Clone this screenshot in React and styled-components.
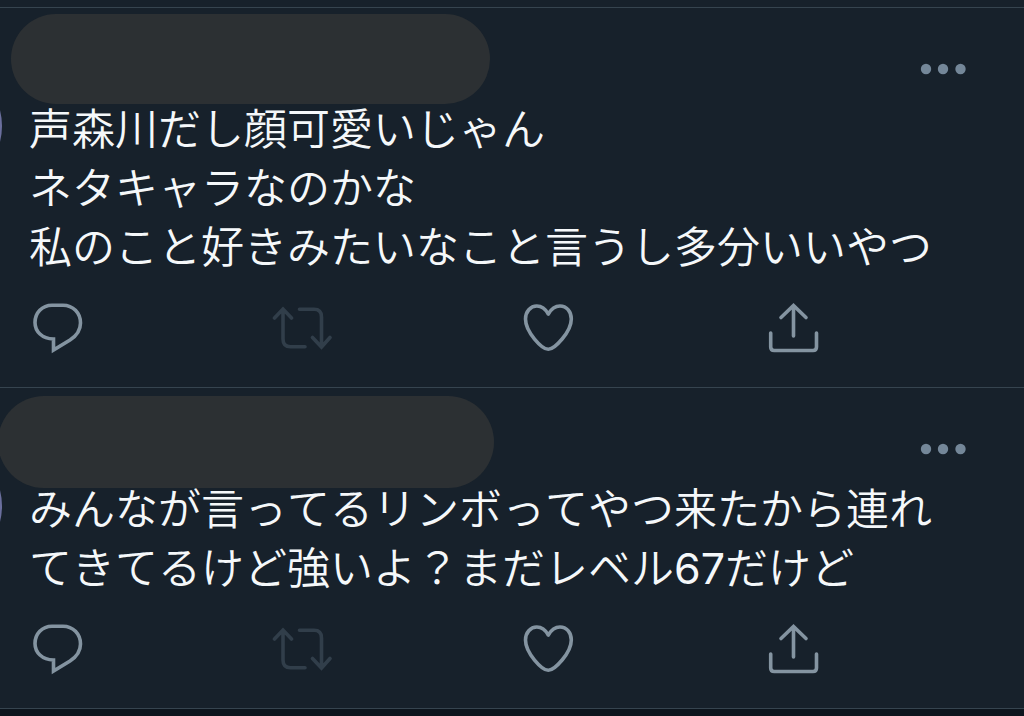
import React from "react";
import styled, { createGlobalStyle } from "styled-components";

const COLOURS = {
  background: "#17212b",
  border: "#36444f",
  footer: "#0d151d",
  text: "#f5f8fa",
  icon: "#8494a1",
  iconDisabled: "#313e4a",
  dots: "#748799",
  pill: "#2c3033",
  avatar: "#6b6f9e",
};

const GlobalStyle = createGlobalStyle`
  html,
  body,
  #root {
    height: 100%;
  }

  body {
    margin: 0;
    background-color: ${COLOURS.footer};
    overflow: hidden;
  }
`;

const Timeline = styled.main`
  padding-top: 7px;
  background-color: ${COLOURS.background};
  overflow: hidden;
`;

const TweetList = styled.div`
  border-top: 1px solid ${COLOURS.border};
`;

const Tweet = styled.article`
  position: relative;
  border-bottom: 1px solid ${COLOURS.border};
`;

const Avatar = styled.div`
  position: absolute;
  top: 53px;
  left: -128px;
  width: 130px;
  height: 130px;
  border-radius: 50%;
  background-color: ${COLOURS.avatar};
`;

const Header = styled.header`
  display: flex;
  align-items: flex-start;
  justify-content: flex-end;
  height: 92px;
  padding-right: 54px;
`;

const NamePill = styled.div`
  position: absolute;
  top: ${(props) => (props.$wide ? 8 : 6)}px;
  left: ${(props) => (props.$wide ? -2 : 11)}px;
  width: ${(props) => (props.$wide ? 496 : 479)}px;
  height: ${(props) => (props.$wide ? 92 : 90)}px;
  border-radius: 46px;
  background-color: ${COLOURS.pill};
`;

const IconButton = styled.button`
  display: block;
  padding: 0;
  border: none;
  background: none;
  color: ${(props) => (props.disabled ? COLOURS.iconDisabled : COLOURS.icon)};
  cursor: pointer;

  svg {
    display: block;
  }
`;

const MoreButton = styled(IconButton)`
  margin-top: 46px;
  color: ${COLOURS.dots};
`;

const TweetText = styled.p`
  position: relative;
  margin: 0;
  padding: 0 72px 0 29px;
  color: ${COLOURS.text};
  font-family: Inter, "Noto Sans CJK JP", sans-serif;
  font-size: 43px;
  font-weight: 350;
  font-kerning: none;
  line-height: 59px;
  white-space: pre-line;
`;

const Digits = styled.span`
  font-weight: 400;
`;

const Actions = styled.div`
  display: flex;
  justify-content: space-between;
  padding: 21px 201px 29px 27px;
`;

function Icon(props) {
  return (
    <svg
      width="60"
      height="60"
      viewBox="0 0 60 60"
      fill="none"
      stroke="currentColor"
      strokeWidth="3.6"
      strokeLinecap="round"
      aria-hidden="true"
    >
      {props.children}
    </svg>
  );
}

function TweetCard(props) {
  return (
    <Tweet>
      <Avatar />
      <Header>
        <NamePill $wide={props.wide} />
        <MoreButton aria-label="その他">
          <svg width="54" height="30" viewBox="0 0 54 30" fill="currentColor">
            <circle cx="10" cy="15" r="5.2" />
            <circle cx="27" cy="15" r="5.2" />
            <circle cx="44.5" cy="15" r="5.2" />
          </svg>
        </MoreButton>
      </Header>
      <TweetText lang="ja">{props.children}</TweetText>
      <Actions>
        <IconButton aria-label="返信">
          <Icon>
            <path d="M26.5 41V52L43 42C50 37.5 53.5 32 53.5 25C53.5 15 46 7.2 36 7.2H25C15 7.2 8 15 8 24.5C8 33.5 15 40.7 26.5 41Z" />
          </Icon>
        </IconButton>
        <IconButton aria-label="リツイート" disabled>
          <Icon>
            <path d="M2.5 20L11 11L19.5 20M11 11V41Q11 48.7 18.5 48.7H33" />
            <path d="M27.5 11.3H42Q49.5 11.3 49.5 19V49M40.5 39.5L49.5 49L58 39.5" />
          </Icon>
        </IconButton>
        <IconButton aria-label="いいね">
          <Icon>
            <path
              d="M30.3 16C27.5 11 23.5 8 18.8 8C12.5 8 7.5 13.5 7.5 21C7.5 34 24 51.3 30.3 51.3C36.5 51.3 53.3 34 53.3 21C53.3 13.5 48.5 8 42 8C37.3 8 33.2 11 30.3 16Z"
              strokeLinejoin="round"
            />
          </Icon>
        </IconButton>
        <IconButton aria-label="共有">
          <Icon>
            <path d="M30.5 38V7.5M18 19.5L30.5 7.5L43 19.5" />
            <path d="M7.7 35V49Q7.7 52.5 11.2 52.5H50Q53.5 52.5 53.5 49V35" />
          </Icon>
        </IconButton>
      </Actions>
    </Tweet>
  );
}

function App() {
  return (
    <>
      <GlobalStyle />
      <Timeline>
        <TweetList>
          <TweetCard>
            {
              "声森川だし顔可愛いじゃん\nネタキャラなのかな\n私のこと好きみたいなこと言うし多分いいやつ"
            }
          </TweetCard>
          <TweetCard wide>
            みんなが言ってるリンボってやつ来たから連れてきてるけど強いよ？まだレベル
            <Digits>67</Digits>だけど
          </TweetCard>
        </TweetList>
      </Timeline>
    </>
  );
}

export default App;
